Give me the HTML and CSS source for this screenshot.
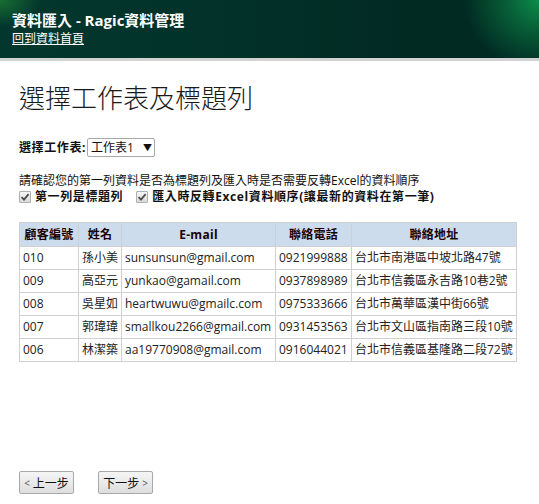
FILE: index.html
```html
<!DOCTYPE html>
<html lang="zh-Hant">
<head>
<meta charset="utf-8">
<title>資料匯入 - Ragic資料管理</title>
<link rel="stylesheet" href="styles.css">
</head>
<body>
<header class="topbar">
  <div class="app-title">資料匯入 - Ragic資料管理</div>
  <a class="home-link" href="#">回到資料首頁</a>
</header>
<div class="rule"></div>
<main class="content">
  <h1 class="page-title">選擇工作表及標題列</h1>
  <div class="sheet-row">
    <span class="sheet-label">選擇工作表:</span>
    <span class="select">工作表1<span class="arrow">▼</span></span>
  </div>
  <p class="hint">請確認您的第一列資料是否為標題列及匯入時是否需要反轉Excel的資料順序</p>
  <div class="checks">
    <label class="check"><span class="box"><svg viewBox="0 0 12 12" width="12" height="12"><path d="M2.6 6.2 L5 8.6 L9.6 3.2" fill="none" stroke="#4d4d4d" stroke-width="1.8"/></svg></span>第一列是標題列</label>
    <label class="check"><span class="box"><svg viewBox="0 0 12 12" width="12" height="12"><path d="M2.6 6.2 L5 8.6 L9.6 3.2" fill="none" stroke="#4d4d4d" stroke-width="1.8"/></svg></span>匯入時反轉Excel資料順序(讓最新的資料在第一筆)</label>
  </div>
  <table class="grid">
    <thead>
      <tr><th class="c1">顧客編號</th><th class="c2">姓名</th><th class="c3">E-mail</th><th class="c4">聯絡電話</th><th class="c5">聯絡地址</th></tr>
    </thead>
    <tbody>
      <tr><td>010</td><td>孫小美</td><td>sunsunsun@gmail.com</td><td>0921999888</td><td>台北市南港區中坡北路47號</td></tr>
      <tr><td>009</td><td>高亞元</td><td>yunkao@gamail.com</td><td>0937898989</td><td>台北市信義區永吉路10巷2號</td></tr>
      <tr><td>008</td><td>吳星如</td><td>heartwuwu@gmailc.com</td><td>0975333666</td><td>台北市萬華區漢中街66號</td></tr>
      <tr><td>007</td><td>郭瑋瑋</td><td>smallkou2266@gmail.com</td><td>0931453563</td><td>台北市文山區指南路三段10號</td></tr>
      <tr><td>006</td><td>林潔築</td><td>aa19770908@gmail.com</td><td>0916044021</td><td>台北市信義區基隆路二段72號</td></tr>
    </tbody>
  </table>
  <div class="nav">
    <button class="btn" type="button"><span class="chev">&lt;</span>上一步</button>
    <button class="btn" type="button">下一步<span class="chev">&gt;</span></button>
  </div>
</main>
</body>
</html>
```

FILE: styles.css
```css
html, body {
  margin: 0;
  padding: 0;
  background: #ffffff;
}
body {
  font-family: "Open Sans", "Noto Sans CJK TC", sans-serif;
  font-size: 12px;
  color: #111;
}
.topbar {
  height: 58px;
  box-sizing: border-box;
  padding: 11px 0 0 12px;
  background:
    radial-gradient(ellipse 75px 70px at 100% 0%, #0c8c4a 0%, rgba(10,120,64,0.7) 40%, rgba(4,60,40,0) 100%),
    radial-gradient(ellipse 40px 26px at 0% 0%, rgba(30,130,50,0.75) 0%, rgba(10,70,40,0) 100%),
    linear-gradient(to right, #03372e 0%, #023229 40%, #012a23 75%, #012a23 100%);
}
.app-title {
  color: #fff;
  font-weight: bold;
  font-size: 15px;
  line-height: 19px;
}
.home-link {
  display: inline-block;
  color: #fff;
  font-size: 12px;
  line-height: 15px;
  text-decoration: underline;
}
.rule {
  height: 3px;
  background: #d2d2d2;
}
.content {
  padding: 23px 19px 0 19px;
}
.page-title {
  margin: 0;
  font-family: "Liberation Serif", "Noto Sans CJK TC", serif;
  font-weight: 300;
  font-size: 26px;
  line-height: 31px;
  color: #1a1a1a;
}
.sheet-row {
  margin-top: 22px;
  display: flex;
  align-items: center;
  height: 20px;
}
.sheet-label {
  font-weight: bold;
  letter-spacing: 0.6px;
  margin-right: 1px;
}
.select {
  box-sizing: border-box;
  width: 68px;
  height: 19px;
  border: 1px solid #a9a9a9;
  border-radius: 2px;
  background: #fff;
  display: flex;
  align-items: center;
  padding-left: 3px;
  line-height: 17px;
}
.arrow {
  font-size: 9px;
  margin-left: 9px;
}
.hint {
  margin: 15px 0 0 0;
  line-height: 17px;
}
.checks {
  display: flex;
  gap: 13px;
  line-height: 16px;
  font-weight: bold;
  letter-spacing: 0.6px;
}
.check {
  display: flex;
  align-items: center;
}
.box {
  box-sizing: border-box;
  width: 12px;
  height: 12px;
  border: 1px solid #b0b0b0;
  border-radius: 1px;
  background: linear-gradient(#f6f6f6, #dadada);
  margin-right: 4px;
  display: flex;
  align-items: center;
  justify-content: center;
  overflow: hidden;
}
.box svg {
  display: block;
  flex: none;
}
.grid {
  margin-top: 17px;
  border-collapse: collapse;
  border: 1px solid #d0d0d0;
  width: 498px;
  table-layout: fixed;
}
.grid th, .grid td {
  border: 1px solid #d0d0d0;
  padding: 3px 3px;
  line-height: 16px;
  white-space: nowrap;
  overflow: hidden;
}
.grid th {
  background: #cddcec;
  font-weight: bold;
  color: #1a0000;
  height: 17px;
  letter-spacing: 0.3px;
}
.grid td {
  height: 16px;
  color: #222;
}
.c1 { width: 52px; }
.c2 { width: 36px; }
.c3 { width: 147px; }
.c4 { width: 69px; }
.grid .c5 { width: auto; }
.nav {
  margin-top: 109px;
  display: flex;
  gap: 24px;
}
.btn {
  font-family: "Open Sans", "Noto Sans CJK TC", sans-serif;
  font-size: 12px;
  color: #111;
  width: 55px;
  height: 23px;
  padding: 0;
  border: 1px solid #a8a8a8;
  border-radius: 2px;
  background: linear-gradient(#f5f5f5, #dedede);
  display: flex;
  align-items: center;
  justify-content: center;
  gap: 3px;
}
.chev {
  font-size: 10px;
  color: #555;
}
```
